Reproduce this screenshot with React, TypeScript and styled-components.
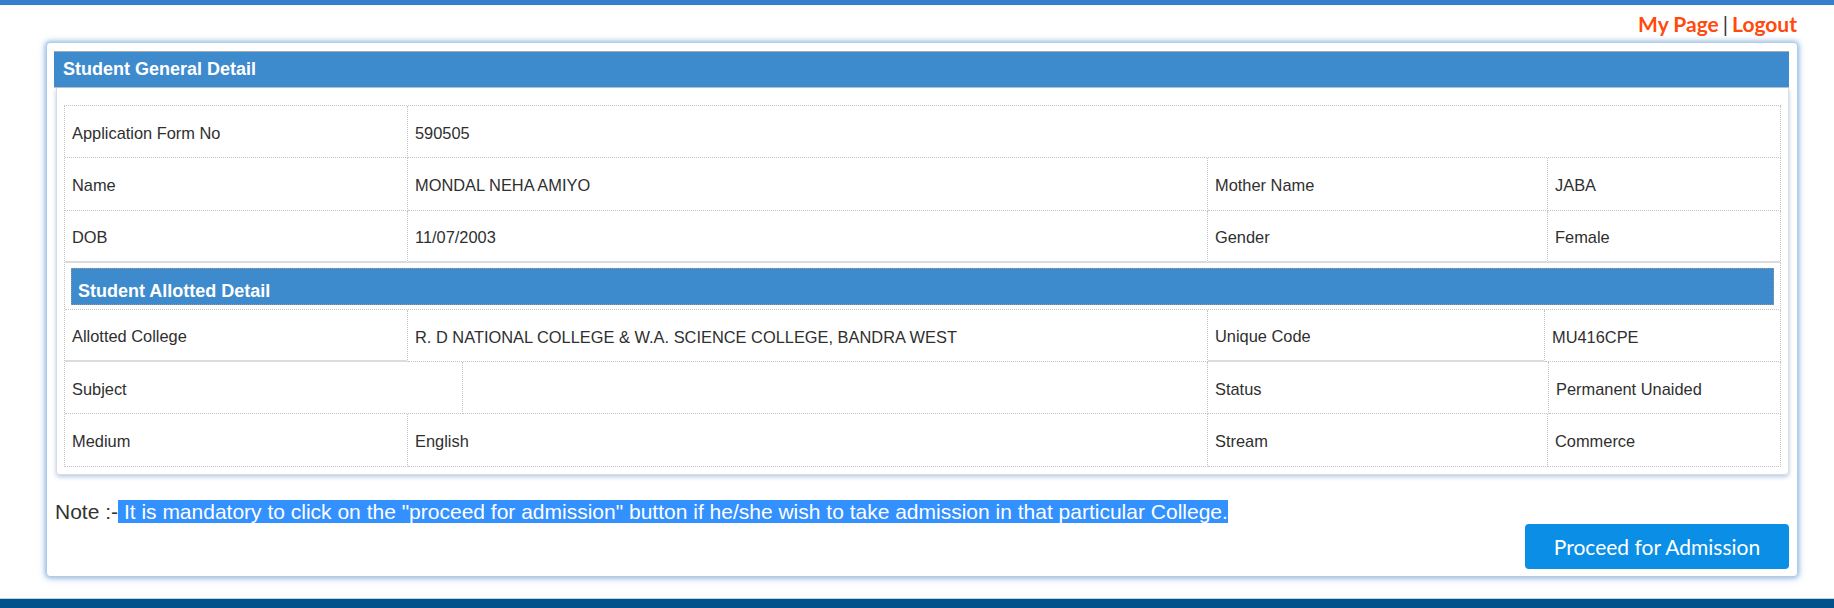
import React from "react";
import styled, { createGlobalStyle } from "styled-components";

const GlobalStyle = createGlobalStyle`
  html, body {
    margin: 0;
    padding: 0;
    background: #ffffff;
  }
  body {
    font-family: "Liberation Sans", Arial, sans-serif;
    color: #333333;
  }
  * { box-sizing: border-box; }
`;

const Page = styled.div`
  display: flex;
  flex-direction: column;
  height: 608px;
  width: 100%;
`;

const TopBar = styled.div`
  height: 5px;
  background: #3580cc;
  flex: none;
`;

const Container = styled.div`
  padding: 0 36px 0 46px;
`;

const TopLinks = styled.div`
  height: 37px;
  padding-top: 7px;
  display: flex;
  justify-content: flex-end;
  align-items: flex-start;
  padding-right: 1px;
  font-family: Lato, "Open Sans", sans-serif;
  font-weight: 700;
  font-size: 21px;
  line-height: 24px;
`;

const NavLink = styled.a`
  color: #ff4a0d;
  text-decoration: none;
  cursor: pointer;
`;

const Pipe = styled.span`
  color: #333333;
  padding: 0 4px;
  font-weight: 400;
`;

const Panel = styled.div`
  border: 1px solid #b4cbe6;
  border-radius: 4px;
  box-shadow: 0 0 4px 1px rgba(74, 137, 207, 0.45), 0 1px 8px rgba(74, 137, 207, 0.35);
  padding: 8px 8px 7px 7px;
  background: #ffffff;
`;

const SectionHeader = styled.div`
  height: 37px;
  border-top: 1px solid #a3adb8;
  border-bottom: 1px solid #b8c4d0;
  background: #3d8bcd;
  color: #ffffff;
  font-weight: 700;
  font-size: 18px;
  line-height: 34px;
  padding-left: 9px;
`;

const PanelBody = styled.div`
  margin: 0 0 0 2px;
  border: 1px solid #dcdcdc;
  border-top: none;
  border-radius: 0 0 4px 4px;
  box-shadow: 0 2px 4px rgba(90, 140, 200, 0.45);
  padding: 17px 7px 7px 7px;
`;

const DetailTable = styled.div`
  border-top: 1px dotted #c4c4c4;
  border-left: 1px dotted #c4c4c4;
`;

const Row = styled.div<{ $cols: string; $h: number }>`
  display: grid;
  grid-template-columns: ${(p) => p.$cols};
  height: ${(p) => p.$h}px;
`;

const Cell = styled.div<{ $span?: number; $solid?: boolean }>`
  grid-column: span ${(p) => p.$span ?? 1};
  display: flex;
  align-items: center;
  padding: 3px 7px 0 7px;
  border-right: 1px dotted #c4c4c4;
  border-bottom: ${(p) => (p.$solid ? "2px solid #dcdcdc" : "1px dotted #c4c4c4")};
  font-size: 16.4px;
  color: #2f2f2f;
  white-space: nowrap;
  overflow: hidden;
`;

const BandRow = styled.div`
  height: 47px;
  padding: 5px 6px 4px 6px;
  border-right: 1px dotted #c4c4c4;
  border-bottom: 1px dotted #c4c4c4;
`;

const SubHeader = styled.div`
  height: 100%;
  background: #3d8bcd;
  border: 1px dotted #9a9a9a;
  color: #ffffff;
  font-weight: 700;
  font-size: 18px;
  line-height: 20px;
  padding: 12px 0 0 6px;
`;

const Note = styled.div`
  margin-top: 25px;
  font-size: 21px;
  line-height: 23px;
  color: #333333;
  padding-left: 1px;
`;

const Selected = styled.span`
  background: #3390ff;
  color: #ffffff;
`;

const Actions = styled.div`
  display: flex;
  justify-content: flex-end;
  margin-top: 1px;
`;

const ProceedButton = styled.button`
  width: 264px;
  height: 45px;
  border: none;
  border-radius: 4px;
  background: #0b8fe6;
  color: #ffffff;
  font-family: Lato, "Open Sans", sans-serif;
  font-size: 21px;
  cursor: pointer;
  padding: 0;
`;

const BottomBar = styled.div`
  margin-top: auto;
  height: 10px;
  border-top: 1px solid #c3d2df;
  background: #00528b;
  flex: none;
`;

type RowData = {
  cols: string;
  h: number;
  cells: { text: string; span?: number; solid?: boolean }[];
};

const C4 = "343px 800px 340px 1fr";

const generalRows: RowData[] = [
  {
    cols: C4,
    h: 52,
    cells: [{ text: "Application Form No" }, { text: "590505", span: 3 }],
  },
  {
    cols: C4,
    h: 53,
    cells: [
      { text: "Name" },
      { text: "MONDAL NEHA AMIYO" },
      { text: "Mother Name" },
      { text: "JABA" },
    ],
  },
  {
    cols: C4,
    h: 52,
    cells: [
      { text: "DOB", solid: true },
      { text: "11/07/2003", solid: true },
      { text: "Gender", solid: true },
      { text: "Female", solid: true },
    ],
  },
];

const allottedRows: RowData[] = [
  {
    cols: "343px 800px 337px 1fr",
    h: 52,
    cells: [
      { text: "Allotted College", solid: true },
      { text: "R. D NATIONAL COLLEGE & W.A. SCIENCE COLLEGE, BANDRA WEST" },
      { text: "Unique Code", solid: true },
      { text: "MU416CPE" },
    ],
  },
  {
    cols: "398px 745px 341px 1fr",
    h: 52,
    cells: [
      { text: "Subject" },
      { text: "" },
      { text: "Status" },
      { text: "Permanent Unaided" },
    ],
  },
  {
    cols: C4,
    h: 53,
    cells: [
      { text: "Medium" },
      { text: "English" },
      { text: "Stream" },
      { text: "Commerce" },
    ],
  },
];

const renderRow = (r: RowData, i: number) => (
  <Row key={i} $cols={r.cols} $h={r.h}>
    {r.cells.map((c, j) => (
      <Cell key={j} $span={c.span} $solid={c.solid}>
        {c.text}
      </Cell>
    ))}
  </Row>
);

export default function App() {
  return (
    <Page>
      <GlobalStyle />
      <TopBar />
      <Container>
        <TopLinks>
          <NavLink>My Page</NavLink>
          <Pipe>|</Pipe>
          <NavLink>Logout</NavLink>
        </TopLinks>
        <Panel>
          <SectionHeader>Student General Detail</SectionHeader>
          <PanelBody>
            <DetailTable>
              {generalRows.map(renderRow)}
              <BandRow>
                <SubHeader>Student Allotted Detail</SubHeader>
              </BandRow>
              {allottedRows.map(renderRow)}
            </DetailTable>
          </PanelBody>
          <Note>
            Note :-
            <Selected>
              {" "}
              It is mandatory to click on the "proceed for admission" button if he/she wish to take
              admission in that particular College.
            </Selected>
          </Note>
          <Actions>
            <ProceedButton>Proceed for Admission</ProceedButton>
          </Actions>
        </Panel>
      </Container>
      <BottomBar />
    </Page>
  );
}
